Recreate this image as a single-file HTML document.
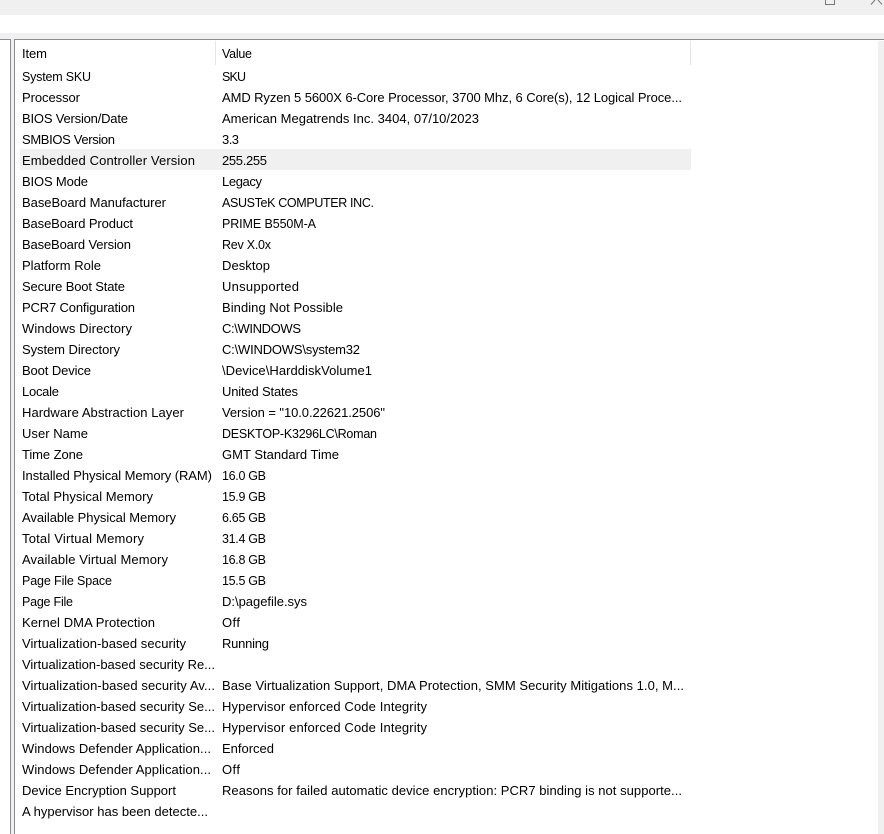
<!DOCTYPE html>
<html lang="en">
<head>
<meta charset="utf-8">
<title>System Information</title>
<style>
html,body{margin:0;padding:0;background:#fff;width:884px;height:834px;overflow:hidden}
svg{display:block}
text{font-family:"Liberation Sans",Arial,sans-serif;font-size:13px;fill:#000}
text.s{font-size:12.5px}
</style>
</head>
<body>
<svg xmlns="http://www.w3.org/2000/svg" width="884" height="834" viewBox="0 0 884 834">
<rect x="0" y="0" width="884" height="834" fill="#fff"/>
<rect x="0" y="0" width="884" height="15" fill="#f0f0f0"/>
<rect x="0" y="33" width="884" height="6" fill="#f0f0f0"/>
<rect x="0" y="39" width="884" height="1" fill="#8a8a92"/>
<rect x="10" y="39" width="4" height="795" fill="#f0f0f0"/>
<rect x="10" y="39" width="1" height="795" fill="#8a8a92"/>
<rect x="14" y="39" width="1" height="795" fill="#8a8a92"/>
<rect x="878" y="41" width="6" height="793" fill="#f0f0f0"/>
<rect x="215" y="41" width="1" height="24" fill="#e5e5e5"/>
<rect x="690" y="41" width="1" height="24" fill="#e5e5e5"/>
<rect x="20" y="149" width="671" height="21" fill="#f0f0f0"/>
<path d="M825.5 0V4.5H834.5V0" fill="none" stroke="#777" stroke-width="1"/>
<path d="M871 4.5L875 0M878 0L882 4.5" fill="none" stroke="#777" stroke-width="1"/>

<text x="22" y="58" textLength="25">Item</text>
<text class="s" x="222" y="58" textLength="30">Value</text>

<text class="s" x="22" y="81" textLength="69">System SKU</text>
<text x="22" y="102" textLength="58">Processor</text>
<text x="22" y="123" textLength="106">BIOS Version/Date</text>
<text x="22" y="144" textLength="93">SMBIOS Version</text>
<text x="22" y="165" textLength="173">Embedded Controller Version</text>
<text x="22" y="186" textLength="66">BIOS Mode</text>
<text x="22" y="207" textLength="144">BaseBoard Manufacturer</text>
<text x="22" y="228" textLength="111">BaseBoard Product</text>
<text x="22" y="249" textLength="109">BaseBoard Version</text>
<text x="22" y="270" textLength="79">Platform Role</text>
<text x="22" y="291" textLength="103">Secure Boot State</text>
<text x="22" y="312" textLength="113">PCR7 Configuration</text>
<text x="22" y="333" textLength="110">Windows Directory</text>
<text x="22" y="354" textLength="98">System Directory</text>
<text x="22" y="375" textLength="69">Boot Device</text>
<text x="22" y="396" textLength="37">Locale</text>
<text x="22" y="417" textLength="162">Hardware Abstraction Layer</text>
<text x="22" y="438" textLength="66">User Name</text>
<text x="22" y="459" textLength="61">Time Zone</text>
<text x="22" y="480" textLength="190">Installed Physical Memory (RAM)</text>
<text x="22" y="501" textLength="131">Total Physical Memory</text>
<text x="22" y="522" textLength="154">Available Physical Memory</text>
<text x="22" y="543" textLength="122">Total Virtual Memory</text>
<text x="22" y="564" textLength="146">Available Virtual Memory</text>
<text class="s" x="22" y="585" textLength="90">Page File Space</text>
<text class="s" x="22" y="606" textLength="51">Page File</text>
<text x="22" y="627" textLength="133">Kernel DMA Protection</text>
<text x="22" y="648" textLength="164">Virtualization-based security</text>
<text x="22" y="669" textLength="193">Virtualization-based security Re...</text>
<text x="22" y="690" textLength="193">Virtualization-based security Av...</text>
<text x="22" y="711" textLength="193">Virtualization-based security Se...</text>
<text x="22" y="732" textLength="193">Virtualization-based security Se...</text>
<text x="22" y="753" textLength="189">Windows Defender Application...</text>
<text x="22" y="774" textLength="189">Windows Defender Application...</text>
<text x="22" y="795" textLength="154">Device Encryption Support</text>
<text x="22" y="816" textLength="186">A hypervisor has been detecte...</text>

<text class="s" x="222" y="81" textLength="24">SKU</text>
<text x="222" y="102" textLength="460">AMD Ryzen 5 5600X 6-Core Processor, 3700 Mhz, 6 Core(s), 12 Logical Proce...</text>
<text x="222" y="123" textLength="257">American Megatrends Inc. 3404, 07/10/2023</text>
<text x="222" y="144" textLength="17">3.3</text>
<text x="222" y="165" textLength="45">255.255</text>
<text x="222" y="186" textLength="40">Legacy</text>
<text class="s" x="222" y="207" textLength="152">ASUSTeK COMPUTER INC.</text>
<text class="s" x="222" y="228" textLength="94">PRIME B550M-A</text>
<text class="s" x="222" y="249" textLength="49">Rev X.0x</text>
<text x="222" y="270" textLength="48">Desktop</text>
<text x="222" y="291" textLength="77">Unsupported</text>
<text x="222" y="312" textLength="121">Binding Not Possible</text>
<text x="222" y="333" textLength="79">C:\WINDOWS</text>
<text x="222" y="354" textLength="138">C:\WINDOWS\system32</text>
<text x="222" y="375" textLength="150">\Device\HarddiskVolume1</text>
<text x="222" y="396" textLength="76">United States</text>
<text x="222" y="417" textLength="163">Version = "10.0.22621.2506"</text>
<text class="s" x="222" y="438" textLength="155">DESKTOP-K3296LC\Roman</text>
<text x="222" y="459" textLength="117">GMT Standard Time</text>
<text class="s" x="222" y="480" textLength="44">16.0 GB</text>
<text class="s" x="222" y="501" textLength="44">15.9 GB</text>
<text class="s" x="222" y="522" textLength="44">6.65 GB</text>
<text class="s" x="222" y="543" textLength="44">31.4 GB</text>
<text class="s" x="222" y="564" textLength="44">16.8 GB</text>
<text class="s" x="222" y="585" textLength="44">15.5 GB</text>
<text x="222" y="606" textLength="85">D:\pagefile.sys</text>
<text x="222" y="627" textLength="18">Off</text>
<text x="222" y="648" textLength="47">Running</text>
<text x="222" y="690" textLength="462">Base Virtualization Support, DMA Protection, SMM Security Mitigations 1.0, M...</text>
<text x="222" y="711" textLength="205">Hypervisor enforced Code Integrity</text>
<text x="222" y="732" textLength="205">Hypervisor enforced Code Integrity</text>
<text x="222" y="753" textLength="52">Enforced</text>
<text x="222" y="774" textLength="18">Off</text>
<text x="222" y="795" textLength="460">Reasons for failed automatic device encryption: PCR7 binding is not supporte...</text>
</svg>
</body>
</html>
